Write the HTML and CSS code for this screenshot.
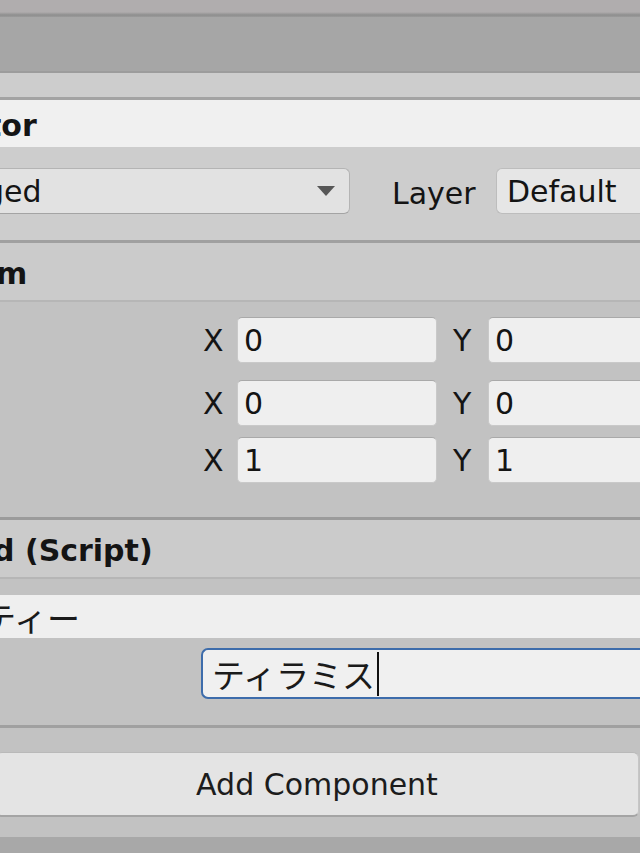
FILE: index.html
```html
<!DOCTYPE html>
<html lang="ja">
<head>
<meta charset="utf-8">
<title>Inspector</title>
<link rel="stylesheet" href="styles.css">
</head>
<body>
<div class="window">
  <div class="tabstrip"></div>
  <div class="toolbar"></div>
  <div class="go-header">
    <div class="name-row">tor</div>
    <div class="tag-row">
      <div class="dropdown">
        <span class="dd-text">ged</span>
        <svg class="dd-arrow" width="18" height="10" viewBox="0 0 18 10"><polygon points="0,0 18,0 9,10" fill="#575757"/></svg>
      </div>
      <span class="layer-label">Layer</span>
      <div class="layer-field">Default</div>
    </div>
  </div>

  <div class="comp-header"><span class="hdr-text hdr-transform">m</span></div>
  <div class="comp-body transform-body">
    <div class="vec-row">
      <span class="axis">X</span><div class="num-field">0</div>
      <span class="axis axis-y">Y</span><div class="num-field">0</div>
    </div>
    <div class="vec-row row-2">
      <span class="axis">X</span><div class="num-field">0</div>
      <span class="axis axis-y">Y</span><div class="num-field">0</div>
    </div>
    <div class="vec-row row-3">
      <span class="axis">X</span><div class="num-field">1</div>
      <span class="axis axis-y">Y</span><div class="num-field">1</div>
    </div>
  </div>

  <div class="comp-header script-header"><span class="hdr-text hdr-script">d (Script)</span></div>
  <div class="comp-body script-body">
    <div class="prop-highlight"><span class="jp hl-text">ティー</span></div>
    <div class="prop-row">
      <div class="text-field"><span class="jp">ティラミス</span><span class="caret"></span></div>
    </div>
  </div>

  <div class="add-area">
    <div class="add-btn">Add Component</div>
  </div>
  <div class="bottom-strip"></div>
</div>
</body>
</html>
```

FILE: styles.css
```css
html, body {
  margin: 0;
  padding: 0;
}
body {
  width: 640px;
  height: 853px;
  overflow: hidden;
  background: #c2c2c2;
  font-family: "DejaVu Sans", "Noto Sans CJK JP", sans-serif;
  font-size: 30px;
  color: #141414;
}
.window {
  width: 640px;
  display: flex;
  flex-direction: column;
}
.tabstrip {
  height: 17px;
  background: linear-gradient(#b0adae 0, #b0adae 12px, #8e8e8e 15px, #9b9b9b 17px);
}
.toolbar {
  height: 54px;
  background: #a6a6a6;
  border-bottom: 2px solid #9c9c9c;
}
.go-header {
  background: #cdcdcd;
  padding: 24px 0 26px;
  border-bottom: 3px solid #a0a0a0;
}
.name-row {
  height: 47px;
  border-top: 3px solid #a3a3a3;
  background: #f0f0f0;
  font-weight: bold;
  display: flex;
  align-items: center;
  padding-top: 3px;
  box-sizing: border-box;
  height: 50px;
  text-indent: -13px;
  white-space: nowrap;
}
.tag-row {
  margin-top: 21px;
  height: 46px;
  display: flex;
  align-items: center;
  width: 640px;
  overflow: visible;
}
.dropdown {
  box-sizing: border-box;
  width: 350px;
  height: 46px;
  flex-shrink: 0;
  background: #e2e2e2;
  border: 1px solid #b4b4b4;
  border-left: none;
  border-bottom-color: #a4a4a4;
  border-radius: 0 6px 6px 0;
  display: flex;
  align-items: center;
  justify-content: space-between;
  padding-right: 14px;
}
.dd-text {
  margin-left: -15px;
  white-space: nowrap;
}
.dd-arrow {
  display: block;
}
.layer-label {
  width: 146px;
  flex-shrink: 0;
  box-sizing: border-box;
  padding-left: 42px;
  margin-top: 4px;
}
.layer-field {
  box-sizing: border-box;
  width: 220px;
  height: 46px;
  flex-shrink: 0;
  background: #e6e6e6;
  border: 1px solid #bdbdbd;
  border-right: none;
  border-radius: 6px 0 0 6px;
  padding-left: 10px;
  display: flex;
  align-items: center;
}
.comp-header {
  height: 57px;
  background: #cbcbcb;
  border-bottom: 2px solid #b6b6b6;
  display: flex;
  align-items: center;
  white-space: nowrap;
}
.hdr-text {
  font-weight: bold;
}
.hdr-transform {
  margin-left: -4px;
  margin-top: 4px;
}
.hdr-script {
  margin-left: -7px;
  margin-top: 4px;
}
.comp-body {
  background: #c2c2c2;
}
.transform-body {
  padding: 15px 0 34px;
  border-bottom: 3px solid #9b9b9b;
}
.vec-row {
  display: flex;
  align-items: center;
  height: 46px;
  padding-left: 203px;
}
.row-2 {
  margin-top: 17px;
}
.row-3 {
  margin-top: 11px;
}
.axis {
  width: 34px;
  flex-shrink: 0;
}
.axis-y {
  width: 35px;
  margin-left: 16px;
}
.num-field {
  box-sizing: border-box;
  width: 200px;
  height: 46px;
  flex-shrink: 0;
  background: #efefef;
  border: 1px solid #c9c9c9;
  border-top-color: #a9a9a9;
  border-radius: 5px;
  padding-left: 6px;
  display: flex;
  align-items: center;
}
.script-body {
  padding: 16px 0 26px;
  border-bottom: 3px solid #a0a0a0;
}
.prop-highlight {
  height: 43px;
  background: #efefef;
  display: flex;
  align-items: center;
  white-space: nowrap;
}
.jp {
  font-family: "Noto Sans CJK JP", sans-serif;
  font-size: 33px;
  color: #1a1a1a;
}
.hl-text {
  margin-left: -17px;
}
.prop-row {
  margin-top: 10px;
  height: 51px;
  padding-left: 201px;
  display: flex;
}
.text-field {
  box-sizing: border-box;
  width: 460px;
  height: 51px;
  flex-shrink: 0;
  background: #f0f0f0;
  border: 2px solid #3d6cab;
  border-right: none;
  border-radius: 7px 0 0 7px;
  padding-left: 9px;
  display: flex;
  align-items: center;
  white-space: nowrap;
}
.caret {
  display: inline-block;
  width: 2px;
  height: 44px;
  background: #111;
  margin-left: 2px;
}
.add-area {
  height: 109px;
  box-sizing: border-box;
  padding-top: 24px;
  background: #c2c2c2;
}
.add-btn {
  box-sizing: border-box;
  margin-left: -4px;
  width: 643px;
  height: 65px;
  background: #e4e4e4;
  border-top: 1px solid #b9b9b9;
  border-bottom: 2px solid #a4a4a4;
  border-right: 1px solid #c6c6c6;
  border-radius: 6px;
  display: flex;
  align-items: center;
  justify-content: center;
  color: #1c1c1c;
}
.bottom-strip {
  height: 16px;
  background: #a8a8a8;
}
```
